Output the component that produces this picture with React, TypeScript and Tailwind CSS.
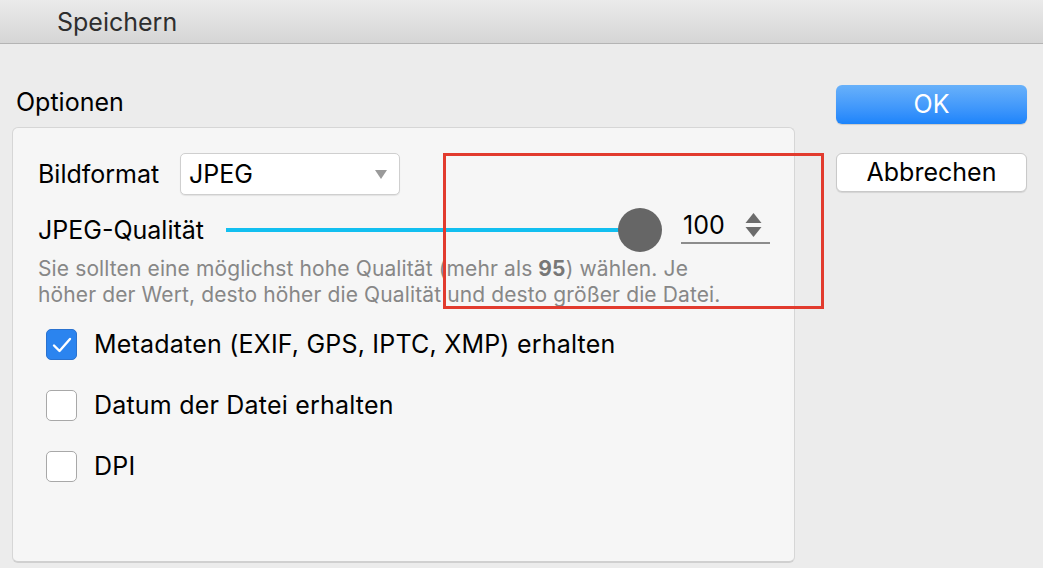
import React from "react";

export default function App() {
  return (
    <div
      className="relative w-[1043px] h-[568px] overflow-hidden bg-[#ececec] text-black"
      style={{ fontFamily: "Inter, 'Liberation Sans', Arial, sans-serif" }}
    >
      {/* Title bar */}
      <div className="h-[44px] border-b border-[#b4b4b4] bg-gradient-to-b from-[#ebebeb] to-[#d5d5d5] flex items-center pl-[57px]">
        <span className="text-[25px] text-[#2e2e2e] leading-none mt-[2px]">Speichern</span>
      </div>

      <div className="flex">
        {/* Left column */}
        <div className="pl-[12px] w-[795px] flex flex-col">
          <div className="pl-[4px] mt-[45px] h-[26px] flex items-center text-[25px] leading-none">
            Optionen
          </div>
          <div className="mt-[12px] h-[436px] rounded-[6px] border border-[#d6d6d6] border-b-[2px] border-b-[#d0d0d0] bg-[#f6f6f6] pl-[25px] pr-[24px] flex flex-col">
            {/* Bildformat row */}
            <div className="mt-[25px] flex items-center">
              <span className="w-[123px] text-[25px] leading-none whitespace-nowrap">Bildformat</span>
              <div className="ml-[19px] w-[220px] h-[42px] rounded-[5px] border border-[#cfcfcf] bg-white shadow-[0_1px_1px_rgba(0,0,0,0.08)] flex items-center pl-[8px] pr-[12px] justify-between">
                <span className="text-[25px] leading-none">JPEG</span>
                <svg width="12" height="9" viewBox="0 0 12 9">
                  <path d="M0 0 H12 L6 9 Z" fill="#9a9a9a" />
                </svg>
              </div>
            </div>

            {/* Quality row */}
            <div className="mt-[12px] flex items-center h-[46px]">
              <span className="w-[169px] text-[25px] leading-none whitespace-nowrap">JPEG-Qualität</span>
              <div className="ml-[19px] flex-1 flex items-center">
                <div className="flex-1 h-[4px] bg-[#12bff0]" />
                <div className="w-[44px] h-[44px] rounded-full bg-[#666666] -ml-[1px]" />
              </div>
              <div className="ml-[19px] w-[89px] h-[34px] border-b-[2px] border-[#8c8c8c] flex items-center justify-between pl-[2px] pr-[8px] -mt-[7px]">
                <span className="text-[25px] leading-none">100</span>
                <svg width="17" height="25" viewBox="0 0 17 25">
                  <path d="M8.5 0 L16.5 10 H0.5 Z" fill="#6b6b6b" />
                  <path d="M0.5 14 H16.5 L8.5 24 Z" fill="#6b6b6b" />
                </svg>
              </div>
            </div>

            {/* Help text */}
            <div className="mt-[3px] text-[21px] leading-[26px] tracking-[0.12px] text-[#878787] whitespace-nowrap">
              Sie sollten eine möglichst hohe Qualität (mehr als <span className="font-bold text-[#777]">95</span>) wählen. Je
              <br />
              höher der Wert, desto höher die Qualität und desto größer die Datei.
            </div>

            {/* Checkboxes */}
            <div className="mt-[21px] flex flex-col gap-[30px] pl-[8px]">
              <label className="flex items-center gap-[17px]">
                <div className="w-[31px] h-[31px] rounded-[5px] bg-[#2b84ef] border border-[#2a72cf] flex items-center justify-center">
                  <svg width="20" height="16" viewBox="0 0 20 16">
                    <path d="M2 8.5 L7.5 14 L18 2" fill="none" stroke="white" strokeWidth="2.4" strokeLinecap="round" strokeLinejoin="round" />
                  </svg>
                </div>
                <span className="text-[25px] leading-none tracking-[0.2px] whitespace-nowrap">Metadaten (EXIF, GPS, IPTC, XMP) erhalten</span>
              </label>
              <label className="flex items-center gap-[17px]">
                <div className="w-[31px] h-[31px] rounded-[5px] bg-white border border-[#a8a8a8]" />
                <span className="text-[25px] leading-none tracking-[0.2px]">Datum der Datei erhalten</span>
              </label>
              <label className="flex items-center gap-[17px]">
                <div className="w-[31px] h-[31px] rounded-[5px] bg-white border border-[#a8a8a8]" />
                <span className="text-[25px] leading-none tracking-[0.2px]">DPI</span>
              </label>
            </div>
          </div>
        </div>

        {/* Right column: buttons */}
        <div className="ml-[41px] w-[191px] flex flex-col">
          <button className="mt-[41px] h-[39px] rounded-[6px] bg-gradient-to-b from-[#68b1fa] to-[#1b84fb] text-white text-[25px] leading-none flex items-center justify-center shadow-[0_1px_1px_rgba(0,0,0,0.15)]">
            OK
          </button>
          <button className="mt-[29px] h-[39px] rounded-[6px] bg-white border border-[#c9c9c9] text-black text-[25px] leading-none flex items-center justify-center shadow-[0_1px_1px_rgba(0,0,0,0.1)]">
            Abbrechen
          </button>
        </div>
      </div>

      {/* Red annotation rectangle */}
      <div className="absolute left-[443px] top-[153px] w-[381px] h-[156px] border-[3px] border-[#e23b2e]" />
    </div>
  );
}
